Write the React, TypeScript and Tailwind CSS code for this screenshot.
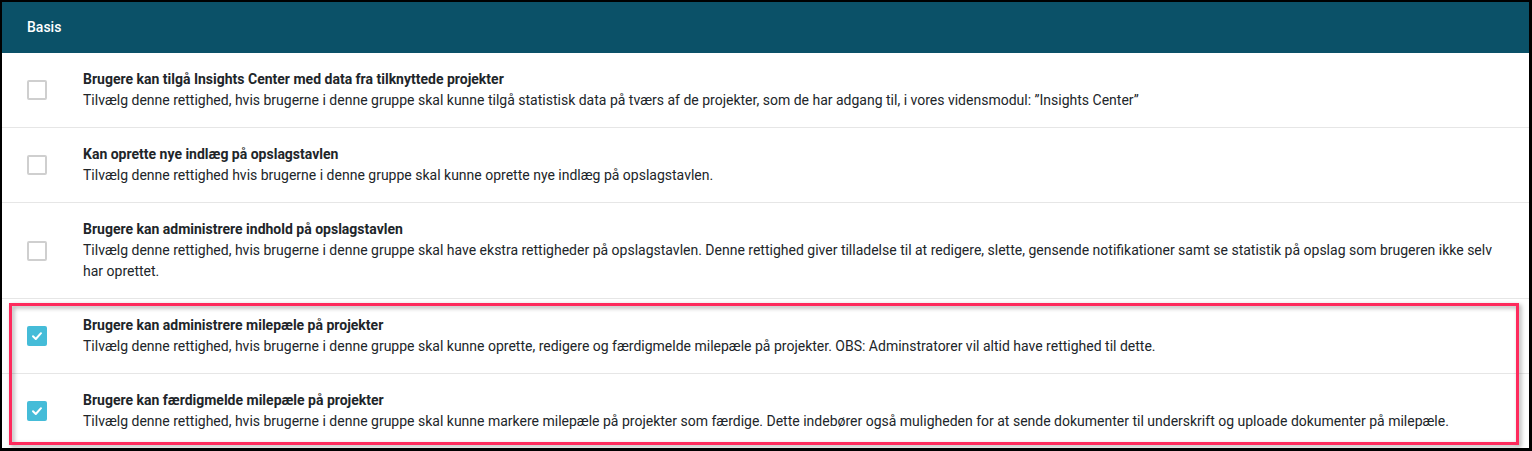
import React from "react";

type Row = { title: string; desc: string; checked: boolean };

const rows: Row[] = [
  {
    title: "Brugere kan tilgå Insights Center med data fra tilknyttede projekter",
    desc: "Tilvælg denne rettighed, hvis brugerne i denne gruppe skal kunne tilgå statistisk data på tværs af de projekter, som de har adgang til, i vores vidensmodul: ”Insights Center”",
    checked: false,
  },
  {
    title: "Kan oprette nye indlæg på opslagstavlen",
    desc: "Tilvælg denne rettighed hvis brugerne i denne gruppe skal kunne oprette nye indlæg på opslagstavlen.",
    checked: false,
  },
  {
    title: "Brugere kan administrere indhold på opslagstavlen",
    desc: "Tilvælg denne rettighed, hvis brugerne i denne gruppe skal have ekstra rettigheder på opslagstavlen. Denne rettighed giver tilladelse til at redigere, slette, gensende notifikationer samt se statistik på opslag som brugeren ikke selv har oprettet.",
    checked: false,
  },
  {
    title: "Brugere kan administrere milepæle på projekter",
    desc: "Tilvælg denne rettighed, hvis brugerne i denne gruppe skal kunne oprette, redigere og færdigmelde milepæle på projekter. OBS: Adminstratorer vil altid have rettighed til dette.",
    checked: true,
  },
  {
    title: "Brugere kan færdigmelde milepæle på projekter",
    desc: "Tilvælg denne rettighed, hvis brugerne i denne gruppe skal kunne markere milepæle på projekter som færdige. Dette indebører også muligheden for at sende dokumenter til underskrift og uploade dokumenter på milepæle.",
    checked: true,
  },
];

function Box({ checked }: { checked: boolean }) {
  if (checked) {
    return (
      <div className="w-[20px] h-[20px] rounded-[2px] bg-[#45bcd8] flex items-center justify-center shrink-0">
        <svg width="14" height="14" viewBox="0 0 14 14" fill="none">
          <polyline points="3,7.2 5.8,10 11,4.2" stroke="#ffffff" strokeWidth="2" strokeLinecap="round" strokeLinejoin="round" />
        </svg>
      </div>
    );
  }
  return <div className="w-[20px] h-[20px] rounded-[2px] border-2 border-[#cfcfcf] bg-white shrink-0" />;
}

export default function App() {
  return (
    <div className="w-[1532px] h-[451px] bg-black pt-[2px] pl-[2px] pr-[3px] pb-[3px] overflow-hidden" style={{ fontFamily: "Roboto, 'Liberation Sans', sans-serif" }}>
      <div className="relative w-full h-full bg-white overflow-hidden">
        <div className="h-[51px] bg-[#0b5168] flex items-center pl-[25px] text-white text-[14px] font-medium">Basis</div>
        {rows.map((r, i) => (
          <div key={i} className="flex items-center border-b border-[#e6e6e6] py-[16px]">
            <div className="w-[81px] pl-[25px] flex items-center shrink-0">
              <Box checked={r.checked} />
            </div>
            <div className="pr-[26px] text-[14px] leading-[21px] text-[#212529]">
              <div className="font-bold">{r.title}</div>
              <div>{r.desc}</div>
            </div>
          </div>
        ))}
        <div className="absolute left-[7px] top-[301px] w-[1510px] h-[142px] border-[3px] border-[#fe2a5c] drop-shadow-[2px_2px_2px_rgba(0,0,0,0.35)]" />
      </div>
    </div>
  );
}
